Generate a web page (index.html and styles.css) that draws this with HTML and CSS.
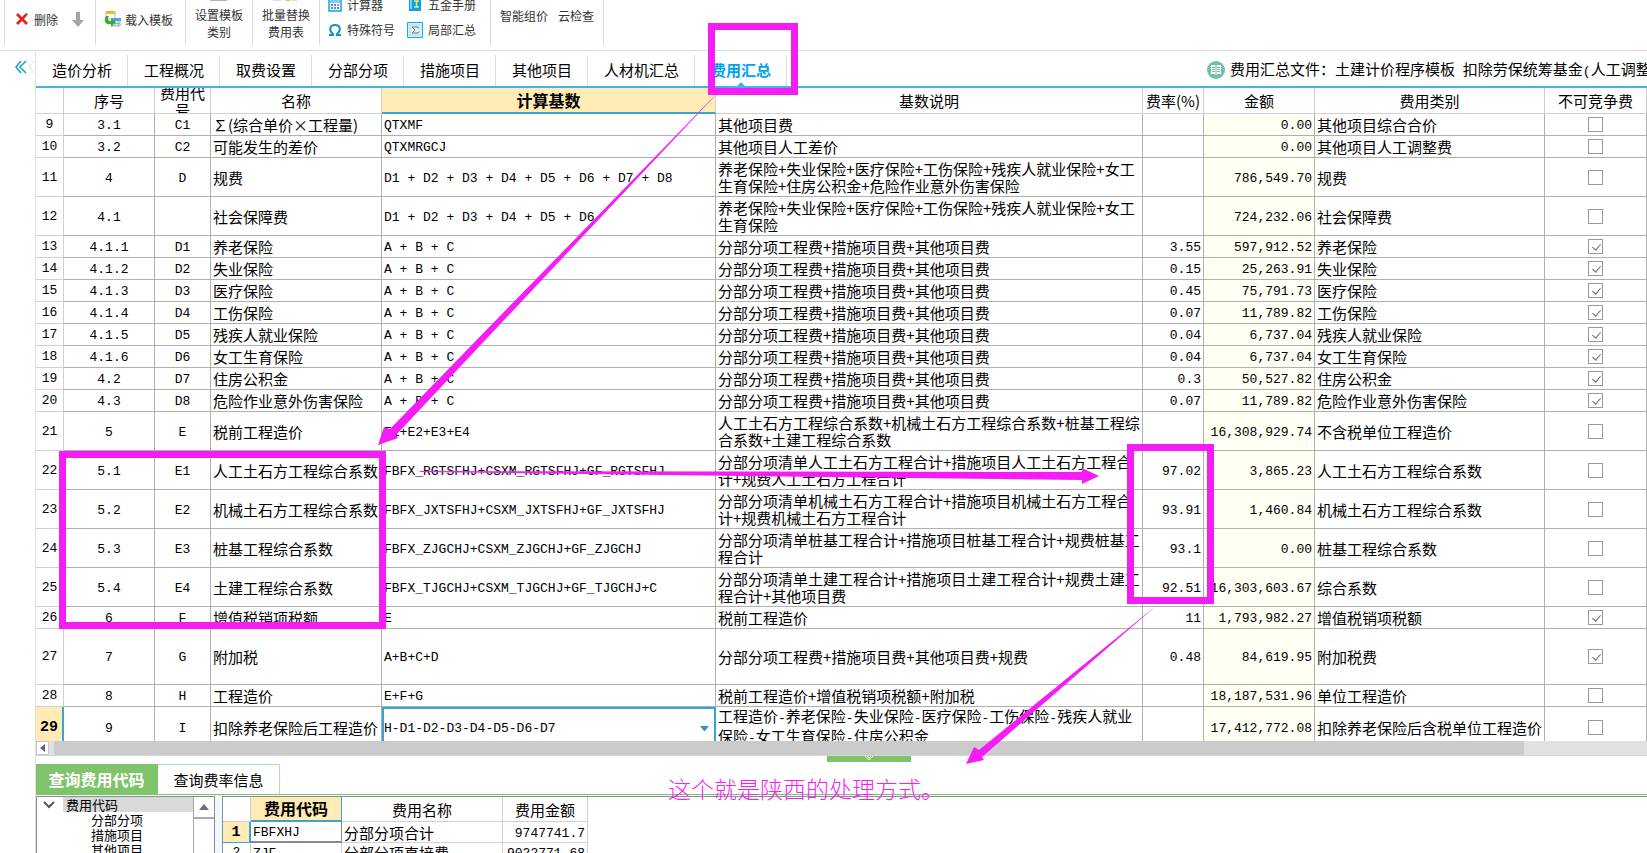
FILE: index.html
```html
<!DOCTYPE html>
<html lang="zh-CN">
<head>
<meta charset="utf-8">
<title>费用汇总</title>
<link rel="stylesheet" href="styles.css">
</head>
<body>
<header class="toolbar">
  <div class="group group-edit">
    <button class="tool"><svg width="14" height="14" viewBox="0 0 14 14"><path d="M1 3 3 1 7 5 11 1 13 2 9 7 13 11 11 13 7 9 3 13 1 11 5 7Z" fill="#e3221b"/></svg>删除</button>
    <button class="tool" aria-label="下移"><svg width="14" height="16" viewBox="0 0 14 16"><path d="M5 1H9V9H13L7 16 1 9H5Z" fill="#a6a6a6"/></svg></button>
  </div>
  <div class="group group-load">
    <button class="tool"><svg width="17" height="16" viewBox="0 0 17 16"><path d="M2 1H11V8H2Z" fill="#fff" stroke="#bbb"/><path d="M2 0H11V3H2Z" fill="#f7b52c"/><path d="M8 8H16V15H8Z" fill="#eaf6ff" stroke="#9ab"/><path d="M8 7H17V10H8Z" fill="#4ba6e8"/><path d="M11 10V15M14 10V15M8 12.500H16" stroke="#9ab"/><path d="M2 5C-1 11 2 14 7 13V16L12 11 7 7V10C4 10 3 8 5 5Z" fill="#38ad35"/></svg>载入模板</button>
  </div>
  <div class="group group-big"><button class="tool-big"><svg width="18" height="8" viewBox="0 0 18 8"><path d="M0 0H17V8H0Z" fill="#b5b5b5"/></svg>设置模板<br>类别</button></div>
  <div class="group group-big"><button class="tool-big"><svg width="28" height="10" viewBox="0 0 28 10"><path d="M1 0V9H9M19 9H25V0" fill="none" stroke="#bbb"/><path d="M9 6H14V4H20V7H26V9H18V10H14V9H9Z" fill="#fdb913"/></svg>批量替换<br>费用表</button></div>
  <div class="group group-tools">
    <div class="stack">
      <button class="tool"><svg width="14" height="14" viewBox="0 0 14 14"><path d="M1 1H13V13H1Z" fill="#eef8ff" stroke="#16a3e0" stroke-width="1.500"/><path d="M2 2H12V5H2Z" fill="#7ecbf0"/><path d="M3 7H5M6 7H8M3 10H5M6 10H8M9 10H11" stroke="#246bb5" stroke-width="1.500"/><path d="M9 7H11" stroke="#e54" stroke-width="1.500"/></svg>计算器</button>
      <button class="tool"><svg width="14" height="14" viewBox="0 0 14 14"><path d="M1 12H5V11C1 8 1 2 7 2S13 8 9 11V12H13" fill="none" stroke="#168fcb" stroke-width="2"/></svg>特殊符号</button>
    </div>
    <div class="stack">
      <button class="tool"><svg width="16" height="16" viewBox="0 0 16 16"><path d="M2 1H14V14H2Z" fill="#00a4ec"/><path d="M4 1V12" stroke="#fff"/><path d="M7 4H12M7 10H12M9.500 4V10" stroke="#ffe15a" stroke-width="1.500"/></svg>五金手册</button>
      <button class="tool"><svg width="16" height="16" viewBox="0 0 16 16"><path d="M.5.5H15.500V15.500H.5Z" fill="#d6f0fb" stroke="#16a9ec"/><path d="M2 3H14M2 6H14M2 10H14M2 13H14" stroke="#8fd0ee" stroke-dasharray="2 1"/><path d="M5 4H11V12H5Z" fill="#eee"/><path d="M11 6V5H5L8 8 5 11H11V10" fill="none" stroke="#777"/></svg>局部汇总</button>
    </div>
  </div>
  <div class="group group-smart"><button class="tool">智能组价</button><button class="tool">云检查</button></div>
</header>

<main class="workspace">
  <aside class="rail">
    <button class="collapse" aria-label="收起"><svg width="20" height="14" viewBox="0 0 20 14"><path d="M6 1 1 7 6 13M11 1 5 7 11 13" fill="none" stroke="#169fc9" stroke-width="1.500"/><path d="M19 1 14 7 19 13" fill="none" stroke="#ddd"/></svg></button>
  </aside>
  <div class="content">
    <nav class="tabs">
      <button class="tab">造价分析</button><button class="tab">工程概况</button><button class="tab">取费设置</button><button class="tab">分部分项</button><button class="tab">措施项目</button><button class="tab">其他项目</button><button class="tab">人材机汇总</button><button class="tab tab-active">费用汇总</button>
      <div class="file"><svg width="18" height="18" viewBox="0 0 18 18"><circle cx="9" cy="9" r="9" fill="#6fc2a6"/><path d="M4 4H8L9 5 10 4H14V13H10L9 14 8 13H4Z" fill="#fff"/><path d="M5 6.500H8M5 8.500H8M5 10.500H8M10 6.500H13M10 8.500H13M10 10.500H13M9 5V13" stroke="#6fc2a6"/></svg><span>费用汇总文件：土建计价程序模板<span class="mono"> </span>扣除劳保统筹基金<span class="mono">(</span>人工调整</span></div>
    </nav>
    <div class="sheet">
      <table class="grid">
        <colgroup><col class="w-row"><col class="w-no"><col class="w-code"><col class="w-name"><col class="w-calc"><col class="w-desc"><col class="w-rate"><col class="w-sum"><col class="w-type"><col class="w-check"></colgroup>
        <thead><tr><th></th><th>序号</th><th><div class="clip">费用代<br>号</div></th><th>名称</th><th class="picked">计算基数</th><th>基数说明</th><th>费率(%)</th><th>金额</th><th>费用类别</th><th>不可竞争费</th></tr></thead>
        <tbody id="rows"></tbody>
      </table>
    </div>
    <div class="hscroll"><button class="hleft" aria-label="向左"><svg width="6" height="8" viewBox="0 0 6 8"><path d="M5 0V8L0 4Z" fill="#606674"/></svg></button><div class="thumb"></div></div>
    <div class="splitter"><button class="handle" aria-label="折叠"><svg width="10" height="6" viewBox="0 0 10 6"><path d="M1 0 5 4 9 0M3 0 5 2 7 0" fill="none" stroke="#fff"/></svg></button></div>
    <section class="dock">
      <div class="dock-tabs"><button class="dock-tab dock-active">查询费用代码</button><button class="dock-tab">查询费率信息</button></div>
      <div class="dock-body">
        <div class="tree">
          <ul class="nodes">
            <li class="root"><svg width="12" height="8" viewBox="0 0 12 8"><path d="M1 1 6 6 11 1" fill="none" stroke="#555" stroke-width="2"/></svg><span>费用代码</span></li>
            <li class="leaf">分部分项</li><li class="leaf">措施项目</li><li class="leaf">其他项目</li>
          </ul>
          <div class="vscroll"><button class="vup" aria-label="向上"><svg width="10" height="6" viewBox="0 0 10 6"><path d="M0 6 5 0 10 6Z" fill="#687080"/></svg></button></div>
        </div>
        <div class="codes">
          <table class="code-table">
            <thead><tr><th class="c-row"></th><th class="c-code picked">费用代码</th><th class="c-name">费用名称</th><th class="c-sum">费用金额</th></tr></thead>
            <tbody>
              <tr><th class="current">1</th><td class="mono focus">FBFXHJ</td><td>分部分项合计</td><td class="mono num">9747741.7</td></tr>
              <tr><th>2</th><td class="mono">ZJF</td><td>分部分项直接费</td><td class="mono num">9022771.68</td></tr>
            </tbody>
          </table>
        </div>
      </div>
    </section>
  </div>
</main>

<div class="notes">
  <svg class="ink" width="1647" height="853" viewBox="0 0 1647 853" fill="#f61cf6">
    <path d="M711.500 26.500H794.500V91.500H711.500ZM62.500 454.500H382.500V625.500H62.500ZM1130.500 447.500H1210.500V600.500H1130.500Z" fill="none" stroke="#f61cf6" stroke-width="7"/>
    <path d="M728 82 390 429 384 427 378 445 398 438 396 435Z"/>
    <path d="M420 471 1082 472V468L1099 476 1082 484V480L420 472Z"/>
    <path d="M1157 605 979 750 974 747 966 764 984 760 982 757Z"/>
  </svg>
  <p class="remark">这个就是陕西的处理方式。</p>
</div>
<script src="rows.js"></script>
</body>
</html>
```

FILE: styles.css
```css
* { box-sizing: border-box; }
body {
  margin: 0; height: 100vh; overflow: hidden; position: relative;
  display: flex; flex-direction: column;
  background: #fff; color: #000;
  font: 15px/17px "Noto Sans CJK SC", sans-serif;
}
button { font: inherit; color: inherit; background: none; border: 0; padding: 0; margin: 0; white-space: nowrap; }
svg { display: block; flex: none; }

.toolbar { flex: none; height: 51px; display: flex; border-bottom: 1px solid #dcdcdc; padding-left: 4px; font-size: 12px; color: #333; overflow: hidden; }
.group { height: 45px; display: flex; border-right: 1px solid #dcdcdc; }
.group:first-child { border-left: 1px solid #dcdcdc; }
.tool { display: flex; align-items: center; gap: 5px; }
.group-edit { width: 92px; padding: 0 0 7px 10px; gap: 13px; }
.group-load { width: 90px; padding: 0 0 7px 8px; }
.group-load .tool { gap: 4px; }
.group-big { width: 67px; justify-content: center; align-items: flex-end; padding-bottom: 5px; }
.tool-big { line-height: 17px; text-align: center; }
.tool-big svg { margin: 0 auto 5px; }
.group-tools { width: 171px; padding: 0 9px 3px 8px; gap: 12px; align-items: flex-end; }
.stack { display: flex; flex-direction: column; }
.stack .tool { height: 25px; }
.group-smart { width: 113px; padding: 0 0 15px 9px; gap: 10px; }

.workspace { flex: 1; min-height: 0; display: flex; }
.rail { flex: none; width: 36px; padding: 8px 0 0 15px; border-right: 1px solid #e0e0e0; }
.content { flex: 1; min-width: 0; display: flex; flex-direction: column; }

.tabs { flex: none; height: 37px; padding-top: 4px; display: flex; border-bottom: 2px solid #42b3e5; }
.tab { padding: 0 15px 2px 16px; border-right: 1px solid #ddd; position: relative; }
.tab-active { color: #00a2f0; font-weight: 700; }
.tab-active::after { content: ""; position: absolute; left: 42px; bottom: 0; border: 4px solid transparent; border-top: 0; border-bottom-color: #42b3e5; }
.file { margin-left: auto; width: 440px; padding-bottom: 2px; display: flex; align-items: center; gap: 5px; white-space: pre; overflow: hidden; }

.sheet { flex: 1; min-height: 0; overflow: hidden; }
table { border-collapse: separate; border-spacing: 0; table-layout: fixed; }
th, td { padding: 0 2px; font-weight: 400; white-space: nowrap; overflow: hidden; border-right: 1px solid #b0b0b0; border-bottom: 1px solid #b0b0b0; text-align: left; }
.grid { width: 100%; }
.w-row { width: 28px; } .w-no { width: 91px; } .w-code { width: 56px; } .w-name { width: 171px; } .w-calc { width: 334px; } .w-rate { width: 61px; } .w-sum { width: 111px; } .w-type { width: 230px; } .w-check { width: 102px; }
thead th { height: 26px; text-align: center; border-color: #d0d0d0; }
thead .picked { background: #ffebb3; font-size: 16px; font-weight: 700; border-bottom: 2px solid #35a5d5; }
.clip { height: 25px; display: flex; align-items: center; justify-content: center; overflow: hidden; }
.mono, tbody th { font: 13px/17px "Liberation Mono", monospace; }
tbody th { text-align: center; border-color: #d0d0d0; }
td.mono { padding-top: 2px; }
.h1 { height: 22px; } .h2 { height: 39px; } .h3 { height: 56px; }
.mid { text-align: center; }
.num { text-align: right; }
.sum { background: #fffff3; }
.current { background: #ffebb3; font-size: 15px; font-weight: 700; border-right: 2px solid #35a5d5; }
.grid .editing { padding: 0; border: 2px solid #35a5d5; border-bottom: 0; }
.combo { appearance: none; display: block; width: 100%; height: 36px; padding: 0; margin: 0; border: 0; border-radius: 0; outline: 0; color: #000; background: #fff; font: 13px/17px "Liberation Mono", monospace; }
.combo-wrap { position: relative; }
.combo-wrap svg { position: absolute; right: 5px; top: 15px; }
input[type="checkbox"] { appearance: none; display: block; width: 15px; height: 15px; margin: 0 auto; border: 1px solid #999; background: #fff; position: relative; }
input[type="checkbox"]:checked::after { content: ""; position: absolute; left: 5px; top: 2px; width: 4px; height: 7px; border: solid #667; border-width: 0 1px 1px 0; transform: rotate(40deg); }

.hscroll { flex: none; height: 15px; display: flex; background: #e1e1e1; border-bottom: 1px solid #d5d5d5; padding-right: 123px; gap: 5px; }
.hleft { width: 13px; border: 1px solid #c8c8c8; background: #fff; display: flex; align-items: center; justify-content: center; }
.thumb { flex: 1; background: #cbcbcb; border-radius: 2px; }
.splitter { flex: none; height: 8px; display: flex; justify-content: center; }
.handle { width: 84px; height: 6px; margin-left: 55px; background: #7fc36a; display: flex; justify-content: center; }

.dock { flex: none; height: 89px; display: flex; flex-direction: column; }
.dock-tabs { height: 31px; display: flex; border-bottom: 1px solid #7fc36a; }
.dock-tab { width: 122px; border: 1px solid #b2e39e; border-width: 1px 1px 0 0; }
.dock-active { background: #7fc36a; color: #fff; font-size: 16px; font-weight: 700; border-color: #7fc36a; }
.dock-body { flex: 1; min-height: 0; display: flex; gap: 7px; background: #effafc; overflow: hidden; padding-top: 1px; }
.tree { width: 179px; display: flex; background: #fff; border: 1px solid #8a8d98; border-bottom: 0; }
.nodes { flex: 1; margin: 0; padding: 0; list-style: none; font-size: 13px; line-height: 15px; }
.root { display: flex; align-items: center; padding-left: 6px; }
.root span { flex: 1; margin-left: 8px; padding-left: 3px; background: #d9d9d9; }
.leaf { padding-left: 54px; }
.vscroll { width: 21px; border-left: 1px solid #aaa; }
.vup { width: 100%; height: 22px; border-bottom: 2px solid #aaa; display: flex; align-items: center; justify-content: center; }
.codes { flex: 1; background: #fff; border: 1px solid #8a8d98; border-width: 1px 0 0 1px; }
.code-table { width: 365px; }
.code-table th, .code-table td { border-color: #d0d0d0; height: 19px; }
.code-table thead th { height: 25px; }
.code-table thead .picked, .code-table .current { border-color: #35a5d5; }
.code-table .c-row { width: 28px; } .code-table .c-code { width: 91px; } .code-table .c-name { width: 161px; }
.code-table .focus { border-right: 1px solid #888; border-bottom: 2px solid #888; }

.notes { position: absolute; inset: 0; pointer-events: none; overflow: hidden; }
.ink { position: absolute; left: 0; top: 0; }
.remark { position: absolute; left: 668px; top: 775px; margin: 0; color: #f61cf6; font-size: 23px; line-height: 26px; font-weight: 300; white-space: nowrap; }
```

FILE: rows.js
```js
const base = "分部分项工程费+措施项目费+其他项目费";
const abc = "A + B + C";
const rows = [
  [9, "3.1", "C1", "∑(综合单价×工程量)", "QTXMF", "其他项目费", "", "0.00", "其他项目综合合价", 0, 1],
  [10, "3.2", "C2", "可能发生的差价", "QTXMRGCJ", "其他项目人工差价", "", "0.00", "其他项目人工调整费", 0, 1],
  [11, "4", "D", "规费", "D1 + D2 + D3 + D4 + D5 + D6 + D7 + D8", "养老保险+失业保险+医疗保险+工伤保险+残疾人就业保险+女工<br>生育保险+住房公积金+危险作业意外伤害保险", "", "786,549.70", "规费", 0, 2],
  [12, "4.1", "", "社会保障费", "D1 + D2 + D3 + D4 + D5 + D6", "养老保险+失业保险+医疗保险+工伤保险+残疾人就业保险+女工<br>生育保险", "", "724,232.06", "社会保障费", 0, 2],
  [13, "4.1.1", "D1", "养老保险", abc, base, "3.55", "597,912.52", "养老保险", 1, 1],
  [14, "4.1.2", "D2", "失业保险", abc, base, "0.15", "25,263.91", "失业保险", 1, 1],
  [15, "4.1.3", "D3", "医疗保险", abc, base, "0.45", "75,791.73", "医疗保险", 1, 1],
  [16, "4.1.4", "D4", "工伤保险", abc, base, "0.07", "11,789.82", "工伤保险", 1, 1],
  [17, "4.1.5", "D5", "残疾人就业保险", abc, base, "0.04", "6,737.04", "残疾人就业保险", 1, 1],
  [18, "4.1.6", "D6", "女工生育保险", abc, base, "0.04", "6,737.04", "女工生育保险", 1, 1],
  [19, "4.2", "D7", "住房公积金", abc, base, "0.3", "50,527.82", "住房公积金", 1, 1],
  [20, "4.3", "D8", "危险作业意外伤害保险", abc, base, "0.07", "11,789.82", "危险作业意外伤害保险", 1, 1],
  [21, "5", "E", "税前工程造价", "E1+E2+E3+E4", "人工土石方工程综合系数+机械土石方工程综合系数+桩基工程综<br>合系数+土建工程综合系数", "", "16,308,929.74", "不含税单位工程造价", 0, 2],
  [22, "5.1", "E1", "人工土石方工程综合系数", "FBFX_RGTSFHJ+CSXM_RGTSFHJ+GF_RGTSFHJ", "分部分项清单人工土石方工程合计+措施项目人工土石方工程合<br>计+规费人工土石方工程合计", "97.02", "3,865.23", "人工土石方工程综合系数", 0, 2],
  [23, "5.2", "E2", "机械土石方工程综合系数", "FBFX_JXTSFHJ+CSXM_JXTSFHJ+GF_JXTSFHJ", "分部分项清单机械土石方工程合计+措施项目机械土石方工程合<br>计+规费机械土石方工程合计", "93.91", "1,460.84", "机械土石方工程综合系数", 0, 2],
  [24, "5.3", "E3", "桩基工程综合系数", "FBFX_ZJGCHJ+CSXM_ZJGCHJ+GF_ZJGCHJ", "分部分项清单桩基工程合计+措施项目桩基工程合计+规费桩基工<br>程合计", "93.1", "0.00", "桩基工程综合系数", 0, 2],
  [25, "5.4", "E4", "土建工程综合系数", "FBFX_TJGCHJ+CSXM_TJGCHJ+GF_TJGCHJ+C", "分部分项清单土建工程合计+措施项目土建工程合计+规费土建工<br>程合计+其他项目费", "92.51", "16,303,603.67", "综合系数", 0, 2],
  [26, "6", "F", "增值税销项税额", "E", "税前工程造价", "11", "1,793,982.27", "增值税销项税额", 1, 1],
  [27, "7", "G", "附加税", "A+B+C+D", "分部分项工程费+措施项目费+其他项目费+规费", "0.48", "84,619.95", "附加税费", 1, 3],
  [28, "8", "H", "工程造价", "E+F+G", "税前工程造价+增值税销项税额+附加税", "", "18,187,531.96", "单位工程造价", 0, 1],
  [29, "9", "I", "扣除养老保险后工程造价", "H-D1-D2-D3-D4-D5-D6-D7", "工程造价-养老保险-失业保险-医疗保险-工伤保险-残疾人就业<br>保险-女工生育保险-住房公积金", "", "17,412,772.08", "扣除养老保险后含税单位工程造价", 0, 2]
];
document.getElementById("rows").innerHTML = rows.map(([id, no, code, name, calc, desc, rate, sum, type, on, size]) => {
  const current = id === 29;
  const calcCell = current
    ? `<td class="editing"><div class="combo-wrap"><select class="combo" aria-label="计算基数"><option>${calc}</option></select><svg width="9" height="5" viewBox="0 0 9 5"><path d="M0 0H9L5 5H4Z" fill="#3e8fc0"/></svg></div></td>`
    : `<td class="mono">${calc}</td>`;
  const text = desc.replace(/-/g, '<span class="mono">-</span>');
  return `<tr class="h${size}"><th class="${current ? "current" : ""}">${id}</th><td class="mono mid">${no}</td><td class="mono mid">${code}</td><td>${name}</td>${calcCell}<td>${text}</td><td class="mono num">${rate}</td><td class="mono num sum">${sum}</td><td>${type}</td><td><input type="checkbox" aria-label="${name}" ${on ? "checked" : ""}></td></tr>`;
}).join("");
```
